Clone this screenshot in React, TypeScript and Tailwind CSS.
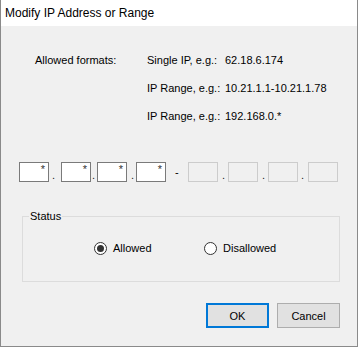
const body = { fontFamily: "'Liberation Sans', Arial, sans-serif" };

const formats = [
  { label: "Allowed formats:", kind: "Single IP, e.g.:", sample: "62.18.6.174" },
  { label: "", kind: "IP Range, e.g.:", sample: "10.21.1.1-10.21.1.78" },
  { label: "", kind: "IP Range, e.g.:", sample: "192.168.0.*" },
];

function Octet({ disabled }: { disabled?: boolean }) {
  return disabled ? (
    <div className="w-[30px] h-[20px] border border-[#cccccc] bg-[#f0f0f0]" />
  ) : (
    <div className="w-[30px] h-[20px] border border-[#7a7a7a] bg-white text-right pr-[3px] leading-[12px] text-[#333]">
      *
    </div>
  );
}

function Dot({ w, pl }: { w: string; pl: string }) {
  return (
    <div className={`${w} ${pl} h-[20px] flex items-end leading-[14px] text-[#222]`}>.</div>
  );
}

function Radio({ checked, label, w }: { checked?: boolean; label: string; w: string }) {
  return (
    <div className={`${w} flex items-center gap-[6px]`}>
      <div className="w-[13px] h-[13px] rounded-full border border-[#333] bg-white flex items-center justify-center">
        {checked && <div className="w-[7px] h-[7px] rounded-full bg-[#333]" />}
      </div>
      <span className="leading-[14px]">{label}</span>
    </div>
  );
}

export default function App() {
  return (
    <div
      className="w-[358px] h-[347px] flex flex-col border-x border-b border-[#8a8a8a] text-black"
      style={body}
    >
      <div className="h-[26px] shrink-0 bg-white flex items-center pl-[4px] text-[12px]">
        Modify IP Address or Range
      </div>

      <div className="flex-1 bg-[#f0f0f0] flex flex-col text-[11px]">
        <div className="mt-[27px] pl-[34px] grid grid-cols-[112px_78px_1fr] gap-y-[14px] leading-[14px]">
          {formats.map((f, i) => (
            <div key={i} className="contents">
              <span>{f.label}</span>
              <span>{f.kind}</span>
              <span>{f.sample}</span>
            </div>
          ))}
        </div>

        <div className="mt-[39px] pl-[18px] flex">
          <Octet />
          <Dot w="w-[12px]" pl="pl-[3px]" />
          <Octet />
          <Dot w="w-[6px]" pl="pl-[1px]" />
          <Octet />
          <Dot w="w-[9px]" pl="pl-[4px]" />
          <Octet />
          <div className="w-[22px] h-[20px] pl-[9px] flex items-center leading-[14px]">-</div>
          <Octet disabled />
          <Dot w="w-[10px]" pl="pl-[4px]" />
          <Octet disabled />
          <Dot w="w-[10px]" pl="pl-[4px]" />
          <Octet disabled />
          <Dot w="w-[10px]" pl="pl-[3px]" />
          <Octet disabled />
        </div>

        <fieldset className="mt-[28px] ml-[21px] w-[318px] h-[72px] border border-[#dcdcdc]">
          <legend className="ml-[6px] px-[1px] leading-[13px]">Status</legend>
          <div className="mt-[18px] pl-[71px] flex">
            <Radio checked label="Allowed" w="w-[110px]" />
            <Radio label="Disallowed" w="w-[110px]" />
          </div>
        </fieldset>

        <div className="mt-[21px] pr-[17px] flex justify-end gap-[8px]">
          <button className="w-[63px] h-[25px] border-2 border-[#0078d7] bg-[#e1e1e1] leading-[14px]">
            OK
          </button>
          <button className="w-[63px] h-[25px] border border-[#adadad] bg-[#e1e1e1] leading-[14px]">
            Cancel
          </button>
        </div>
      </div>
    </div>
  );
}
